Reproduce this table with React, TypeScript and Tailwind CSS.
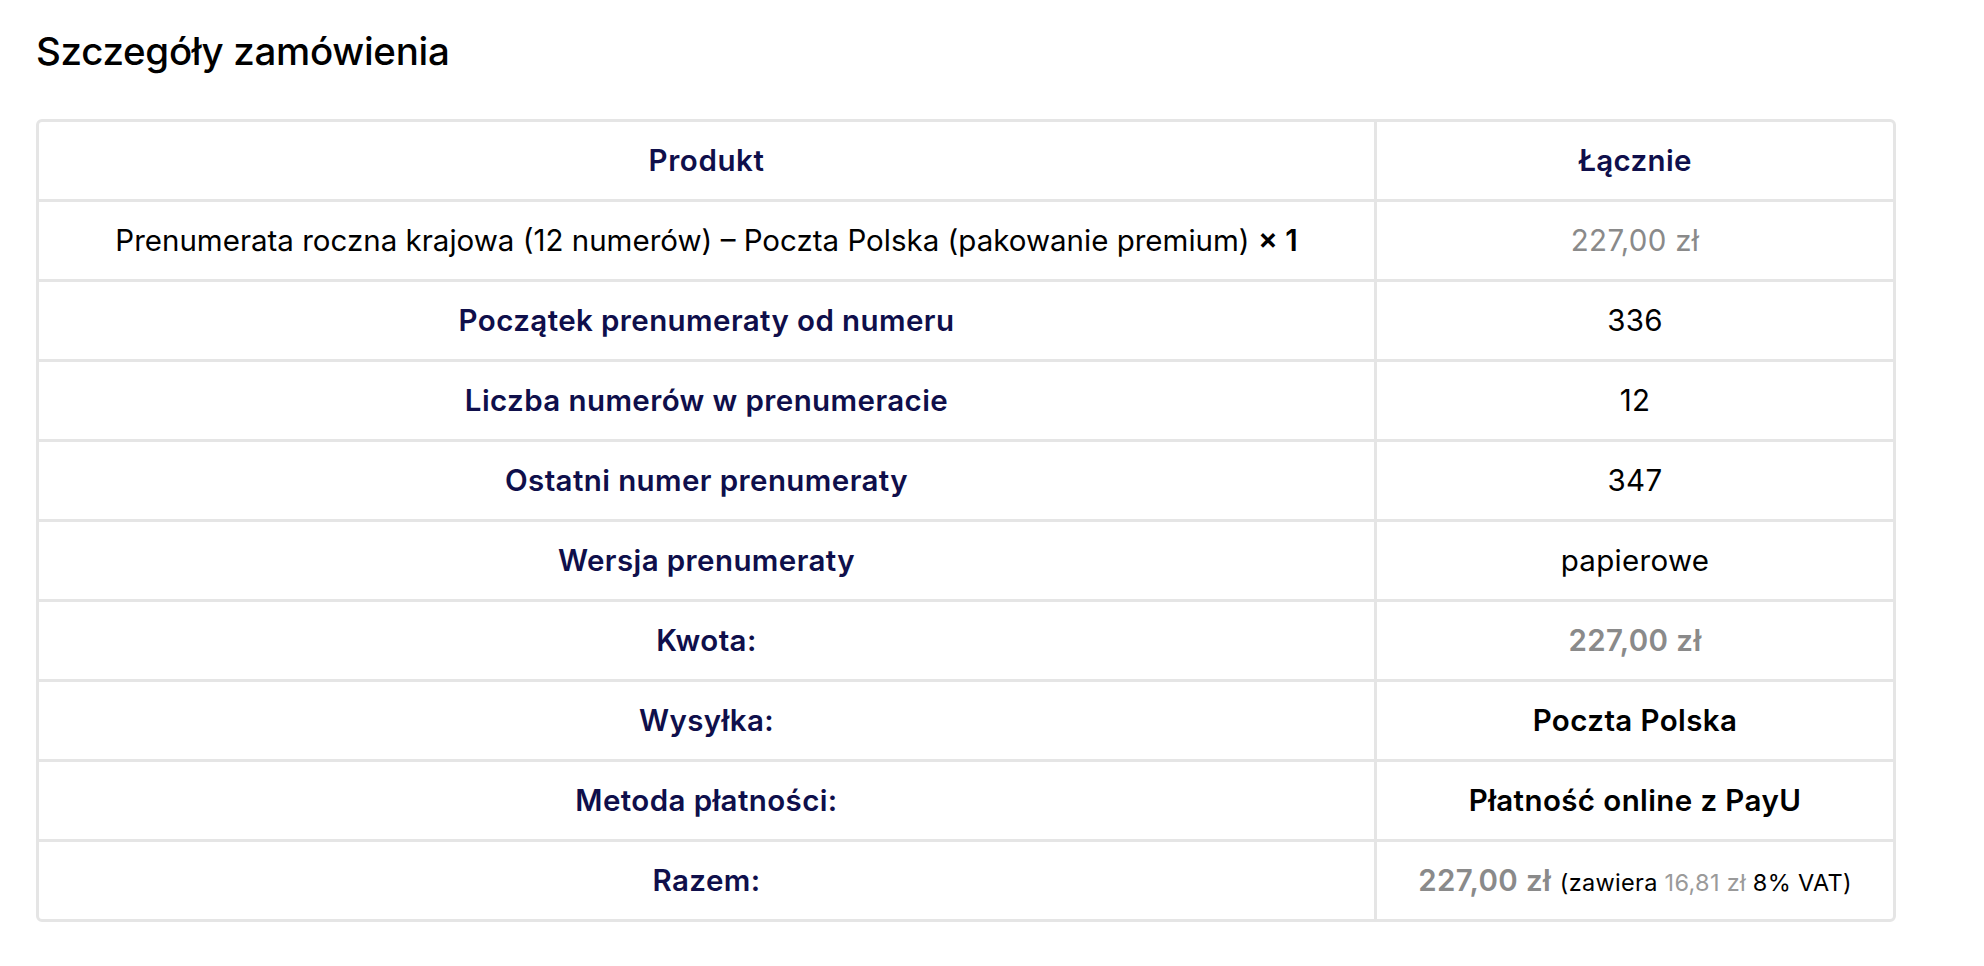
import React from 'react';

type Row = {
  label: React.ReactNode;
  value: React.ReactNode;
};

const navy = 'text-[#0f0f4b]';

const rows: Row[] = [
  {
    label: (
      <span className="font-normal tracking-normal text-black">
        Prenumerata roczna krajowa (12 numerów) – Poczta Polska (pakowanie premium){' '}
        <strong className="font-semibold">× 1</strong>
      </span>
    ),
    value: <span className="text-[#8a8a8a]">227,00 zł</span>,
  },
  { label: 'Początek prenumeraty od numeru', value: '336' },
  { label: 'Liczba numerów w prenumeracie', value: '12' },
  { label: 'Ostatni numer prenumeraty', value: '347' },
  { label: 'Wersja prenumeraty', value: 'papierowe' },
  { label: 'Kwota:', value: <span className="font-semibold tracking-[0.4px] text-[#8a8a8a]">227,00 zł</span> },
  { label: 'Wysyłka:', value: <span className="font-semibold tracking-[0.4px]">Poczta Polska</span> },
  {
    label: 'Metoda płatności:',
    value: <span className="font-semibold tracking-[0.4px]">Płatność online z PayU</span>,
  },
  {
    label: 'Razem:',
    value: (
      <span>
        <span className="font-semibold tracking-[0.4px] text-[#8a8a8a]">227,00 zł</span>{' '}
        <small className="text-[23.5px]">
          (zawiera <span className="text-[#9a9a9a]">16,81 zł</span> 8% VAT)
        </small>
      </span>
    ),
  },
];

export default function App() {
  return (
    <div
      className="min-h-screen bg-white px-[36px] pt-[20px] text-black"
      style={{ fontFamily: 'Inter, "Noto Sans", sans-serif' }}
    >
      <h2 className="text-[38.5px] font-medium leading-[62px] tracking-[-0.3px]">Szczegóły zamówienia</h2>

      <div className="mt-[37px] w-[1860px] overflow-hidden rounded-[6px] border-[3px] border-[#e5e5e5] text-[29.5px]">
        <div className="flex h-[77px]">
          <div
            className={`flex w-[1338px] items-center justify-center border-r-[3px] border-[#e5e5e5] font-semibold tracking-[0.6px] ${navy}`}
          >
            Produkt
          </div>
          <div className={`flex flex-1 items-center justify-center font-semibold tracking-[0.3px] ${navy}`}>
            Łącznie
          </div>
        </div>

        {rows.map((row, i) => (
          <div key={i} className="flex h-[80px] border-t-[3px] border-[#e5e5e5]">
            <div
              className={`flex w-[1338px] items-center justify-center border-r-[3px] border-[#e5e5e5] font-semibold tracking-[0.4px] ${navy}`}
            >
              {row.label}
            </div>
            <div className="flex flex-1 items-center justify-center tracking-[0.3px]">{row.value}</div>
          </div>
        ))}
      </div>
    </div>
  );
}
